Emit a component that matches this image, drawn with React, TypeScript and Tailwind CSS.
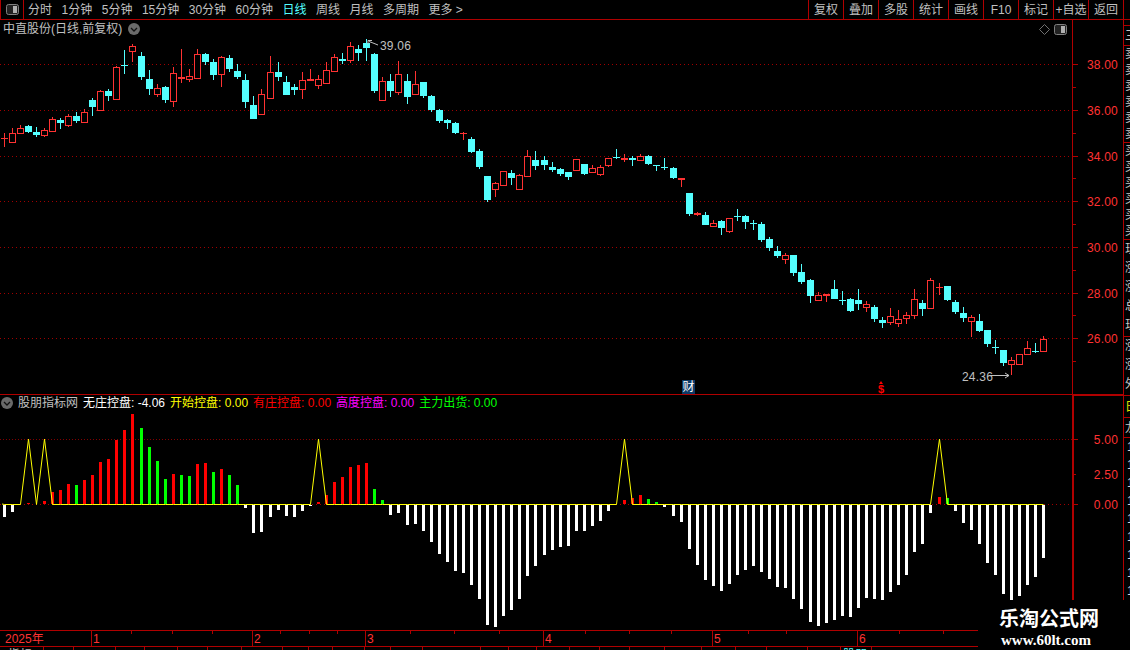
import React from "react";

const RED = "#ff3232";
const CYAN = "#54ffff";
const LINE = "#b00000";
const GRID = "#a00000";

type Row = number[];
// type: 0 red hollow, 1 cyan filled, 2 red filled; then high, top, bottom, low in 3x crop pixels
const A: Row[] = [
  [2,398,415,418,440],[0,385,400,425,428],[0,376,385,400,401],[1,375,378,395,398],[1,382,396,404,410],[0,385,391,406,410],
  [0,352,358,392,395],[1,355,360,369,387],[0,342,349,374,380],[1,337,348,362,368],[0,328,337,365,368],[1,295,300,320,347],
  [0,270,274,329,332],[1,267,274,288,302],[0,198,202,298,299],[1,150,194,196,222],[0,132,139,152,186],[1,156,168,231,240],
  [1,210,237,267,284],[0,252,265,281,290],[1,258,262,300,308],[0,201,220,304,320],[2,147,232,236,248],[0,207,229,238,245],
  [0,147,163,233,235],[1,158,162,186,194],[1,176,186,225,240],[0,167,172,223,260],[1,165,174,207,215],[1,192,213,232,237],
  [1,222,240,305,323],[1,288,316,356,356],[0,267,283,341,342],[0,168,217,293,293],[1,186,216,232,242],[1,228,246,285,285],
  [1,253,262,270,285],[0,216,241,268,297],[2,207,238,242,244],[0,225,238,254,267],[0,186,210,248,248],[0,162,172,212,212],
  [1,159,177,182,191],[0,127,139,179,188],[1,135,147,158,183],[1,117,130,144,183],[1,160,162,273,280],[0,232,244,299,299],
  [1,222,244,273,290],[0,183,223,275,285],[1,222,243,290,311],[0,213,253,281,282],[1,246,246,288,294],[1,284,288,330,335],
  [1,327,330,363,368],[1,357,360,369,387],[1,365,369,399,402],[2,397,399,401,420],[1,411,417,456,459],
];
const B: Row[] = [
  [1,357,363,411,416],[1,438,438,510,516],[0,457,460,476,501],[0,424,424,464,464],[1,420,429,444,465],[0,432,436,476,476],
  [0,360,378,437,440],[1,363,390,408,420],
];
const C: Row[] = [
  [1,48,60,75,90],[1,66,81,90,96],[1,84,87,102,108],[1,96,96,111,120],[0,57,57,90,90],[1,72,72,102,105],[0,75,84,95,96],
  [0,75,81,102,108],[0,54,54,74,81],[1,27,51,53,57],[2,42,54,60,66],[1,48,54,60,78],[0,42,48,60,60],[1,45,48,72,75],
  [1,75,75,77,93],[1,54,81,84,90],[1,81,84,114,117],[2,114,114,120,141],[1,159,159,222,228],[2,216,219,225,228],
  [1,216,225,255,255],[0,240,250,258,258],[1,240,243,264,285],[0,234,234,273,279],[1,207,228,231,243],[1,225,228,246,267],
  [1,240,249,252,270],[1,246,252,300,306],[1,291,297,324,333],[1,318,333,348,354],[0,339,345,357,372],[1,345,345,399,408],
];
const D: Row[] = [
  [1,12,36,66,72],[1,57,60,108,128],[0,96,106,119,122],[2,103,103,108,126],[1,60,87,118,118],[1,93,119,122,135],
  [1,114,117,153,156],[1,87,120,132,150],[0,123,133,141,156],[1,135,141,177,186],[1,171,180,189,204],[0,144,169,185,195],
  [0,150,178,189,201],[0,156,166,174,192],[0,87,118,166,177],[1,120,129,147,168],[0,54,61,143,144],[2,69,81,84,105],
  [1,78,78,120,123],[1,120,126,156,162],[1,141,159,175,186],[0,165,172,182,231],[1,162,183,213,216],[1,210,210,252,261],
  [1,240,261,264,282],[1,270,270,309,318],[0,291,301,311,345],[0,283,283,311,311],[0,243,265,283,286],[1,249,273,276,279],
  [0,228,236,272,272],
];
const shift = (rows: Row[], y0: number) =>
  rows.map(([t, h, a, b, l]) => [t, y0 + h / 3, y0 + a / 3, y0 + b / 3, y0 + l / 3].map(Math.round));
const candles = [...shift(A, 0), ...shift(B, 30), ...shift(C, 140), ...shift(D, 260)];

const extras = [17, 33, 50, 67, 83, 100, 116];
const cx = (i: number) => 4 + 8 * i + extras.filter((k) => i >= k).length;

// histogram: end y of each bar, baseline 504
const bars = [
  517,512,0,503,0,501,492,490,484,485,480,475,462,459,440,430,414,428,447,461,479,474,475,476,464,463,472,469,475,485,
  508,533,532,517,510,516,517,511,506,502,495,482,477,467,465,463,489,500,515,513,525,524,531,542,554,562,571,573,585,599,
  625,627,616,610,599,576,566,555,550,547,546,531,531,526,521,511,0,500,498,495,499,502,507,516,522,549,565,580,586,591,
  584,575,570,566,572,579,587,588,599,609,622,626,623,620,616,617,608,598,599,600,592,585,575,552,544,513,497,498,511,523,
  530,544,563,575,594,600,596,585,577,558,
];
const greens = new Set([9,17,18,19,20,22,23,26,28,29,46,47,80,81,117]);
const peaks = new Set([3,5,39,77,116]);
const yellow = "2,504 " + bars.map((_, i) => `${cx(i) + 0.5},${peaks.has(i) ? 439 : 504.5}`).join(" ");

const priceLabels: [string, number][] = [["38.00",64],["36.00",110],["34.00",156],["32.00",201],["30.00",247],["28.00",293],["26.00",338]];
const minorTicks = [87,133,178,224,270,315,361];

const leftTabs = ["分时","1分钟","5分钟","15分钟","30分钟","60分钟","日线","周线","月线","多周期"];
const rightTabs = ["复权","叠加","多股","统计","画线","F10","标记","+自选","返回"];

const timeCells: [string, number][] = [["2025年",91],["1",161],["2",113],["3",178],["4",169],["5",145],["6",266]];
const timeTicks = [131,172,212,280,309,337,410,454,499,585,629,671,748,786,899,943];
const tabEdges = [43,73,115,144,177,207,241,282,308,332,364,390,422,480,508,536,569,599,629,664,701,735,766,807,840,871];

const sections: { h: number; rows: string; cls: string; lead: string }[] = [
  { h: 6, rows: "", cls: "", lead: "leading-[16px]" },
  { h: 20, rows: "三", cls: "text-[#c8c8c8] pl-px", lead: "leading-[20px]" },
  { h: 97, rows: "卖卖卖卖卖卖", cls: "text-[#c8c8c8] pl-px", lead: "leading-[16px]" },
  { h: 97, rows: "买买买买买买", cls: "text-[#c8c8c8] pl-px", lead: "leading-[16px]" },
  { h: 97, rows: "现涨涨总现", cls: "text-[#c8c8c8] pl-px", lead: "leading-[19px]" },
  { h: 59, rows: "涨涨外", cls: "text-[#c8c8c8] pl-px", lead: "leading-[19px]" },
  { h: 22, rows: "日", cls: "text-[#e0e000] pl-px", lead: "leading-[22px]" },
  { h: 20, rows: "龙", cls: "text-[#c8c8c8] pl-px", lead: "leading-[20px]" },
  { h: 190, rows: "1111111111", cls: "text-[#d8d8d8] pl-[3px]", lead: "leading-[18px]" },
];

function PanelIcon() {
  return (
    <svg width="13" height="11" viewBox="0 0 13 11" className="block">
      <rect x="0.5" y="0.5" width="12" height="10" rx="2" fill="#222" stroke="#808080" />
      <rect x="7" y="2" width="4" height="7" fill="#b0b0b0" />
    </svg>
  );
}

function Chevron() {
  return (
    <svg width="12" height="12" viewBox="0 0 12 12" className="block">
      <circle cx="6" cy="6" r="6" fill="#6a6a6a" />
      <path d="M3 5l3 3 3-3" fill="none" stroke="#111" strokeWidth="1.3" />
    </svg>
  );
}

function PriceChart() {
  return (
    <svg width="1123" height="374" viewBox="0 20 1123 374" className="block" fontFamily="Liberation Sans, sans-serif" fontSize="12">
      {priceLabels.map(([t, y]) => (
        <g key={t}>
          <line x1="0" x2="1072" y1={y + 0.5} y2={y + 0.5} stroke={GRID} strokeDasharray="1 3" />
          <rect x="1073" y={y} width="5" height="1" fill={LINE} />
          <text x="1118" y={y + 5} textAnchor="end" fill={RED} letterSpacing="0.2">{t}</text>
        </g>
      ))}
      {minorTicks.map((y) => <rect key={y} x="1073" y={y} width="3" height="1" fill={LINE} />)}
      <rect x="1072" y="20" width="1" height="374" fill={LINE} />
      <g shapeRendering="crispEdges">
        {candles.map(([t, hi, top, bot, lo], i) => {
          const x = cx(i);
          const color = t === 1 ? CYAN : RED;
          return (
            <g key={i}>
              <rect x={x} y={hi} width="1" height={Math.max(lo - hi, 1)} fill={color} />
              {t === 0 ? (
                <rect x={x - 2.5} y={top + 0.5} width="6" height={Math.max(bot - top, 1)} fill="#000" stroke={color} />
              ) : (
                <rect x={x - 3} y={top} width="7" height={Math.max(bot - top, 1)} fill={color} />
              )}
            </g>
          );
        })}
      </g>
      <path d="M368 44V40.5H372M369 41.5L373 43L378 45" fill="none" stroke="#c0c0c0" />
      <text x="380" y="50" fill="#c0c0c0" letterSpacing="0.2">39.06</text>
      <text x="962" y="381" fill="#c0c0c0" letterSpacing="0.2">24.36</text>
      <path d="M990 375.5H1009M1005 373L1009 375.5L1005 378" fill="none" stroke="#c0c0c0" />
      <path d="M881 381l2 3h-4z" fill="#ff0000" />
      <text x="881" y="393" textAnchor="middle" fill="#ff0000" fontSize="11" fontWeight="700">$</text>
    </svg>
  );
}

function IndicatorChart() {
  return (
    <svg width="1123" height="235" viewBox="0 395 1123 235" className="block" fontFamily="Liberation Sans, sans-serif" fontSize="12">
      <line x1="0" x2="1072" y1="439.5" y2="439.5" stroke="#800000" strokeDasharray="1 2" />
      <line x1="0" x2="1072" y1="504.5" y2="504.5" stroke={GRID} strokeDasharray="1 3" />
      <g shapeRendering="crispEdges">
        {bars.map((y, i) => {
          if (!y) return null;
          const up = y < 504;
          const fill = up ? (greens.has(i) ? "#00ff00" : "#ff0000") : "#ffffff";
          return <rect key={i} x={cx(i) - 1} y={up ? y : 505} width="3" height={up ? 504 - y : y - 505} fill={fill} />;
        })}
      </g>
      <polyline points={yellow} fill="none" stroke="#ffff00" strokeWidth="1" />
      <rect x="1072" y="395" width="2" height="235" fill={LINE} />
      <rect x="1074" y="395" width="49" height="1" fill={LINE} />
      {([["5.00",439],["0.00",504]] as [string, number][]).map(([t, y]) => (
        <g key={t}>
          <rect x="1074" y={y} width="4" height="1" fill={LINE} />
          <text x="1118" y={y + 5} textAnchor="end" fill={RED} letterSpacing="0.2">{t}</text>
        </g>
      ))}
      <rect x="1074" y="474" width="2" height="1" fill={LINE} />
      <text x="1118" y="479" textAnchor="end" fill={RED} letterSpacing="0.2">2.50</text>
    </svg>
  );
}

export default function App() {
  return (
    <div
      className="relative flex h-[650px] w-[1130px] flex-col overflow-hidden bg-black text-[12px] leading-[14px] text-[#c0c0c0]"
      style={{ fontFamily: '"Liberation Sans", "Noto Sans CJK SC", sans-serif' }}
    >
      <div className="flex h-[20px] shrink-0 items-stretch border-b border-[#b00000]">
        <div className="flex w-[24px] items-center justify-center border-r border-l border-[#b00000]">
          <PanelIcon />
        </div>
        <div className="flex items-center gap-[9.5px] pl-[4px]">
          {leftTabs.map((t) => (
            <span key={t} className={t === "日线" ? "text-[#54ffff]" : ""}>{t}</span>
          ))}
          <span>更多 &gt;</span>
        </div>
        <div className="ml-auto mr-[6px] flex border-r border-[#b00000]">
          {rightTabs.map((t) => (
            <span key={t} className="flex w-[35px] items-center justify-center border-l border-[#b00000]">{t}</span>
          ))}
        </div>
      </div>

      <div className="flex min-h-0 flex-1">
        <div className="flex w-[1123px] shrink-0 flex-col">
          <div className="relative h-[374px] shrink-0">
            <PriceChart />
            <div className="absolute left-[3px] top-[2px] flex items-center gap-[6px]">
              <span>中直股份(日线,前复权)</span>
              <Chevron />
            </div>
            <div className="absolute left-[1039px] top-[4px] flex items-center gap-[4px]">
              <svg width="11" height="11" viewBox="0 0 11 11" className="block">
                <path d="M5.5 0.5l5 5-5 5-5-5z" fill="none" stroke="#707070" />
              </svg>
              <PanelIcon />
            </div>
            <span className="absolute left-[682px] top-[360px] flex h-[14px] w-[13px] items-center justify-center bg-[#0d3a66] text-white">财</span>
          </div>

          <div className="relative h-[236px] shrink-0 border-t border-[#b00000]">
            <IndicatorChart />
            <div className="absolute left-[1px] top-[1px] flex items-center whitespace-pre">
              <Chevron />
              <span className="ml-[5px]">股朋指标网</span>
              <span className="ml-[5px] text-white">无庄控盘: -4.06</span>
              <span className="ml-[5px] text-[#ffff00]">开始控盘: 0.00</span>
              <span className="ml-[5px] text-[#ff0000]">有庄控盘: 0.00</span>
              <span className="ml-[5px] text-[#ff00ff]">高度控盘: 0.00</span>
              <span className="ml-[5px] text-[#00ff00]">主力出货: 0.00</span>
            </div>
          </div>

          <div className="relative flex h-[17px] shrink-0 border-y border-[#b00000] text-[#ff3232]">
            {timeCells.map(([t, w], i) => (
              <span
                key={t}
                className={`flex items-center ${i === 0 ? "pl-[5px]" : "border-l border-[#b00000] pl-px"}`}
                style={{ width: w }}
              >
                {t}
              </span>
            ))}
            {timeTicks.map((x) => (
              <i key={x} className="absolute top-0 h-[3px] w-px bg-[#b00000]" style={{ left: x }} />
            ))}
          </div>

          <div className="relative min-h-0 flex-1 overflow-hidden">
            <span className="absolute left-[8px] top-[1px]">指标</span>
            <span className="absolute left-[843px] top-[1px] text-[#54ffff]">股朋</span>
            {tabEdges.map((x) => (
              <i key={x} className="absolute top-0 h-full w-px bg-[#b00000]" style={{ left: x }} />
            ))}
          </div>
        </div>

        <div className="flex min-w-0 flex-1 flex-col overflow-hidden border-l border-[#b00000]">
          {sections.map((s, i) => (
            <div
              key={i}
              className={`shrink-0 overflow-hidden whitespace-nowrap border-b border-[#b00000] ${s.cls} ${s.lead}`}
              style={{ height: s.h }}
            >
              {Array.from(s.rows).map((c, j) => (
                <div key={j}>{c}</div>
              ))}
            </div>
          ))}
        </div>
      </div>

      <div className="absolute bottom-0 right-0 flex h-[50px] w-[152px] flex-col bg-black pl-[21px] pt-[9px] text-white">
        <span className="whitespace-nowrap text-[20px] font-bold leading-[21px]" style={{ fontFamily: '"Liberation Serif", "Noto Sans CJK SC", serif' }}>乐淘公式网</span>
        <span className="ml-[2px] mt-[2px] whitespace-nowrap text-[15px] font-bold leading-[16px]" style={{ fontFamily: '"Liberation Serif", serif' }}>www.60lt.com</span>
      </div>
    </div>
  );
}
